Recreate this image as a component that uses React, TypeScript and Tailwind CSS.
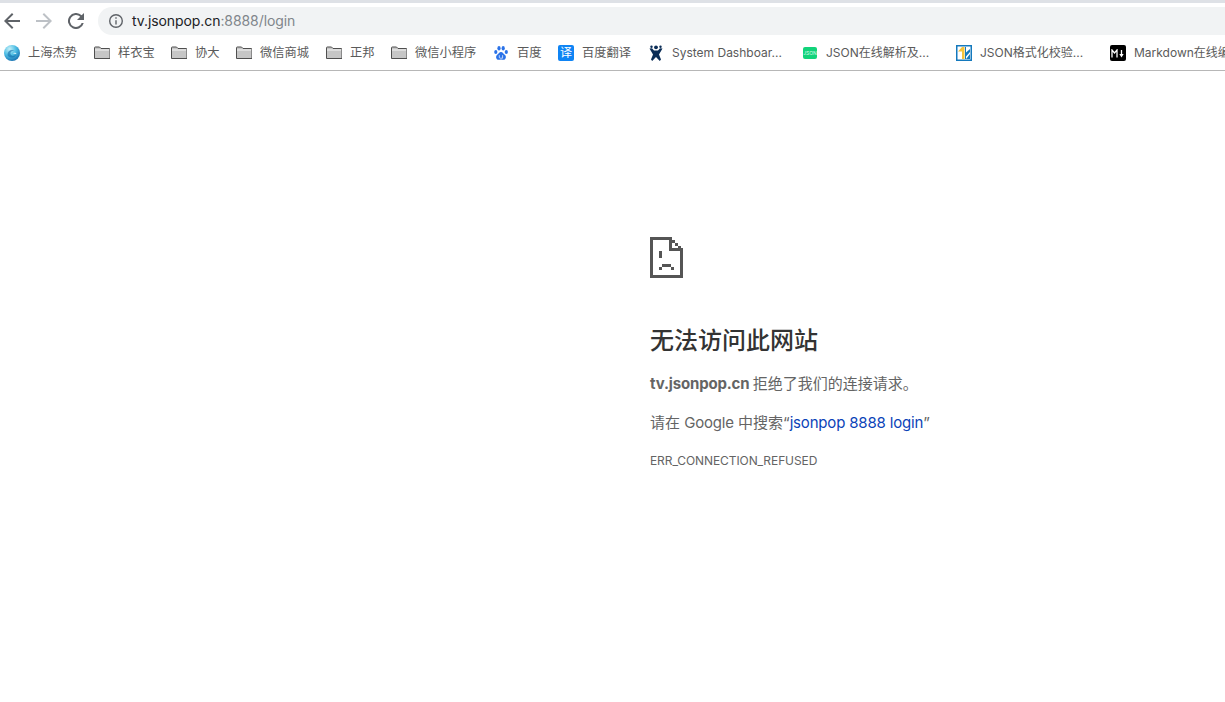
import React from "react";

const FONT = "font-['Inter','Noto_Sans_CJK_SC',sans-serif]";

function Folder() {
  return (
    <svg width="16" height="16" viewBox="0 0 16 16" className="shrink-0">
      <path d="M.5 13.500V2.700c0-.4.3-.7.7-.7h4.300l1.500 1.500h8.300c.4 0 .7.300.7.700v9.300z" fill="#c6c6c6" stroke="#4f4f4f" strokeWidth="1" />
      <path d="M1 4.500h14v1H1z" fill="#f4f4f4" />
    </svg>
  );
}

function Globe() {
  return (
    <svg width="16" height="16" viewBox="0 0 16 16" className="shrink-0">
      <defs>
        <radialGradient id="g" cx="35%" cy="25%" r="80%">
          <stop offset="0" stopColor="#c4f0f8" />
          <stop offset=".5" stopColor="#4dbde4" />
          <stop offset="1" stopColor="#1770b0" />
        </radialGradient>
      </defs>
      <circle cx="8" cy="8" r="8" fill="url(#g)" />
      <path d="M3.500 9.500C3.500 6 7 4 10.500 5.500 8 5.500 6 7 6.500 9c.5 2 3.500 2.500 5.500 .5-1 3-4 3.500-6 2.800-1.500-.5-2.500-1.500-2.500-2.800z" fill="#0f6aa8" opacity=".6" />
      <path d="M9 8.500c1-1 3-.8 3.500.5-1-.3-2.300-.3-3.500-.5z" fill="#e6f8fc" />
    </svg>
  );
}

function Baidu() {
  return (
    <svg width="16" height="16" viewBox="0 0 16 16" className="shrink-0" fill="#2a72e8">
      <ellipse cx="2.800" cy="7" rx="1.600" ry="2.100" />
      <ellipse cx="6" cy="3.200" rx="1.600" ry="2.200" />
      <ellipse cx="10.200" cy="3.200" rx="1.600" ry="2.200" />
      <ellipse cx="13.300" cy="7" rx="1.600" ry="2.100" />
      <path d="M8 7c2 0 2.400 2 4 3 1.600 1.300 1 4.800-1.500 4.800-1 0-1.700-.4-2.500-.4s-1.500.4-2.500.4C3 14.800 2.400 11.300 4 10c1.600-1 2-3 4-3z" />
      <path d="M6.300 10.200v2.100c0 .6.500.9 1 .9h2.300v-3" fill="none" stroke="#fff" strokeWidth=".7" />
    </svg>
  );
}

function Fanyi() {
  return (
    <span className="flex h-4 w-4 shrink-0 items-center justify-center rounded-[2px] bg-[#0f84f4] text-[12px] leading-none text-white">译</span>
  );
}

function Jira() {
  return (
    <svg width="16" height="16" viewBox="0 0 16 16" className="shrink-0" fill="#0b2d57">
      <circle cx="8" cy="2.300" r="1.900" />
      <circle cx="3.500" cy="1.800" r="1.200" />
      <circle cx="12.500" cy="1.800" r="1.200" />
      <path d="M1.500 3.500 4 3.200 6 5.600h4l2-2.400 2.500.3L11 9.500 13 14.500 11.800 16 8 12 4.200 16 3 14.500 5 9.500z" />
    </svg>
  );
}

function JsonGreen() {
  return (
    <span className="flex h-4 w-4 shrink-0 items-center justify-center">
      <span className="flex h-[12px] w-[14px] items-center justify-center rounded-[2px] bg-[#12d37a] text-[5px] leading-none text-[#d8fbe9]">JSON</span>
    </span>
  );
}

function JsonFormat() {
  return (
    <svg width="16" height="16" viewBox="0 0 16 16" className="shrink-0">
      <rect x=".75" y=".75" width="14.500" height="14.500" fill="#fff" stroke="#1479bd" strokeWidth="1.500" />
      <path d="M2 6.500 6 2h2.500v12H6V6.500z" fill="#f5c33b" />
      <path d="M9 2h1v5.500L14 4v3l-4 4.500V14H9z" fill="#1479bd" />
      <path d="M10 14l4-5v5z" fill="#1479bd" />
    </svg>
  );
}

function Markdown() {
  return (
    <span className="flex h-4 w-4 shrink-0 items-center justify-center rounded-[2px] bg-black">
      <svg width="14" height="9" viewBox="0 0 14 9" fill="none" stroke="#fff" strokeWidth="1.300">
        <path d="M1 8.500V1l2.500 3L6 1v7.500" />
        <path d="M10.500 1v5" />
        <path d="M8.300 5h4.400L10.500 8.500z" fill="#fff" stroke="none" />
      </svg>
    </span>
  );
}

function SadDoc() {
  return (
    <svg width="33" height="41" viewBox="0 0 33 41" className="block" fill="#555555">
      <path d="M0 0h22v3H3v35h27V12h3v29H0z" />
      <path d="M19 0h3v11h11v3H19z" />
      <rect x="22" y="3" width="3" height="3" />
      <rect x="25" y="6" width="3" height="3" />
      <rect x="28" y="9" width="3" height="3" />
      <rect x="9" y="14" width="3" height="7" />
      <rect x="12" y="27" width="9" height="3" />
      <rect x="9" y="30" width="3" height="3" />
      <rect x="21" y="30" width="3" height="3" />
    </svg>
  );
}

export default function App() {
  return (
    <div className={`h-[702px] w-[1225px] overflow-hidden bg-white ${FONT}`}>
      <div className="h-[3px] bg-[#dee1e6]" />
      <div className="mt-[4px] mb-[1px] flex h-[28px] items-center">
        <div className="flex w-[98px] shrink-0 items-center pl-[4px]">
          <svg width="16" height="16" viewBox="0 0 16 16" fill="#5f6368">
            <path d="M16 7H3.800l5.600-5.600L8 0 0 8l8 8 1.400-1.400L3.800 9H16z" />
          </svg>
          <svg width="16" height="16" viewBox="0 0 16 16" fill="#bdc1c6" className="ml-[16px]">
            <path d="M0 7h12.200L6.600 1.400 8 0l8 8-8 8-1.400-1.400L12.200 9H0z" />
          </svg>
          <svg width="16" height="16" viewBox="0 0 16 16" fill="#5f6368" className="ml-[16px]">
            <path d="M13.650 2.350A8 8 0 1 0 15.730 10h-2.080a6 6 0 1 1-1.410-6.240L9 7h7V0z" />
          </svg>
        </div>
        <div className="flex h-[28px] grow items-center rounded-l-[14px] bg-[#f1f3f4] pl-[10px] text-[14px] leading-none tracking-[-0.08px]">
          <svg width="16" height="16" viewBox="0 0 16 16" fill="none" stroke="#5f6368" strokeWidth="1.400" className="shrink-0">
            <circle cx="8" cy="8" r="6.300" />
            <path d="M8 7.200v4.300" />
            <path d="M8 4.300v1.500" />
          </svg>
          <span className="ml-[8px] text-[#202124]">tv.jsonpop.cn</span>
          <span className="text-[#80868b]">:8888/login</span>
        </div>
      </div>
      <div className="flex h-[35px] items-center overflow-hidden border-b border-[#b7b7b7] pl-[4px] text-[12px] text-[#5a5a5a]">
        <Bookmark icon={<Globe />} label="上海杰势" width="w-[49px] text-[12.25px]" />
        <Bookmark icon={<Folder />} label="样衣宝" width="w-[36px] text-[12.25px]" />
        <Bookmark icon={<Folder />} label="协大" width="w-[24px] text-[12.25px]" />
        <Bookmark icon={<Folder />} label="微信商城" width="w-[49px] text-[12.25px]" />
        <Bookmark icon={<Folder />} label="正邦" width="w-[24px] text-[12.25px]" />
        <Bookmark icon={<Folder />} label="微信小程序" width="w-[61px] text-[12.25px]" />
        <Bookmark icon={<Baidu />} label="百度" width="w-[24px] text-[12.25px]" />
        <Bookmark icon={<Fanyi />} label="百度翻译" width="w-[49px] text-[12.25px]" />
        <Bookmark icon={<Jira />} label="System Dashboar..." width="w-[113px]" />
        <Bookmark icon={<JsonGreen />} label="JSON在线解析及..." width="w-[113px]" />
        <Bookmark icon={<JsonFormat />} label="JSON格式化校验..." width="w-[113px]" />
        <Bookmark icon={<Markdown />} label="Markdown在线编辑器" width="w-[113px]" />
      </div>
      <main className="ml-[650px] pt-[166px]">
        <SadDoc />
        <h1 className="mt-[48px] text-[24px] font-medium leading-[30px] text-[#333333]">无法访问此网站</h1>
        <p className="mt-[16px] text-[15px] leading-[24px] text-[#646464]">
          <strong className="font-bold tracking-[-0.16px]">tv.jsonpop.cn</strong> <span className="ml-[-1px]">拒绝了我们的连接请求。</span>
        </p>
        <p className="mt-[15px] text-[15px] leading-[24px] text-[#646464]">
          请在 <span className="tracking-[-0.2px]">Google</span> 中搜索“<span className="tracking-[-0.17px] text-[#0b43b8]">jsonpop 8888 login</span>”
        </p>
        <p className="mt-[18px] text-[12px] leading-[16px] tracking-[-0.09px] text-[#646464]">ERR_CONNECTION_REFUSED</p>
      </main>
    </div>
  );
}

function Bookmark({ icon, label, width }: { icon: React.ReactNode; label: string; width: string }) {
  return (
    <div className="mr-[17px] flex shrink-0 items-center gap-[8px] whitespace-nowrap">
      {icon}
      <span className={width}>{label}</span>
    </div>
  );
}
